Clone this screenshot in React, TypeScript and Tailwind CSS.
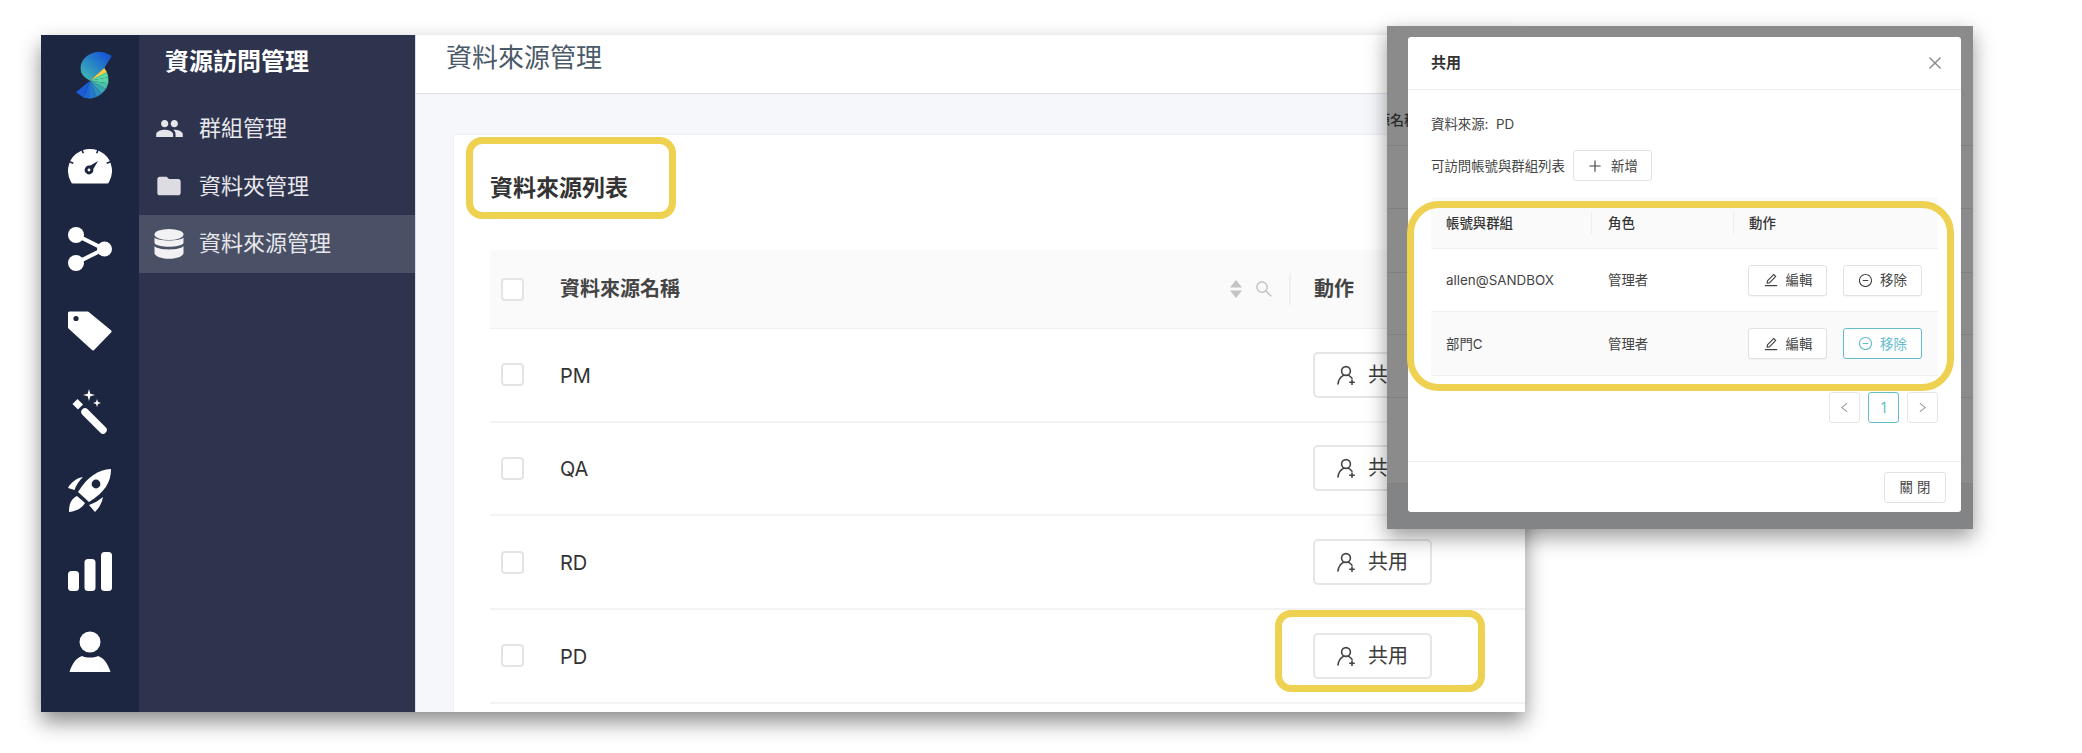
import { MdFolder, MdPeople } from "react-icons/md";
import {
  AiOutlineClose,
  AiOutlineEdit,
  AiOutlineLeft,
  AiOutlineMinusCircle,
  AiOutlinePlus,
  AiOutlineRight,
  AiOutlineSearch,
} from "react-icons/ai";

const Logo = () => (
  <svg width="60" height="70" viewBox="0 0 180 210">
    <defs>
      <linearGradient id="lg" x1="0.1" y1="0.9" x2="0.8" y2="0.1">
        <stop offset="0" stopColor="#3fb4b4" />
        <stop offset="1" stopColor="#1559d6" />
      </linearGradient>
    </defs>
    <path d="M140 48 C122 36 100 32 85 38 C60 46 45 66 47 88 C48 104 60 114 75 122 L118 84 Z" fill="url(#lg)" />
    <path d="M75 122 L118 84 L126 97 Z" fill="#f2d048" />
    <path d="M75 122 L126 97 L130 112 Z" fill="#55dba6" />
    <path d="M75 122 L130 112 L130 130 Z" fill="#5ad3a6" />
    <path d="M75 122 L130 130 L123 147 Z" fill="#48bfa8" />
    <path d="M75 122 L123 147 L110 161 Z" fill="#3aa7b4" />
    <path d="M75 122 L110 161 L95 171 Z" fill="#2d8fc2" />
    <path d="M75 122 L95 171 L75 176 Z" fill="#2478cc" />
    <path d="M75 122 L75 176 L56 173 Z" fill="#1e68d2" />
    <path d="M75 122 L56 173 L33 157 Z" fill="#1a5cd6" />
  </svg>
);

const Gauge = () => (
  <svg width="44" height="36" viewBox="0 0 44 36">
    <path d="M5 35.5 Q3.5 35.5 3 34 A22 22 0 1 1 41 34 Q40.5 35.5 39 35.5 Z" fill="#fff" />
    <g stroke="#1d2640" strokeWidth="1.6">
      <path d="M28.7 5.3 L30.6 0.2" />
      <path d="M15.3 5.3 L13.4 0.2" />
      <path d="M38.7 15.3 L43.8 13.2" />
      <path d="M5.3 15.3 L0.2 13.2" />
    </g>
    <circle cx="21" cy="22" r="4.4" fill="#1d2640" />
    <path d="M19 19.5 L30 13 L23.5 24 Z" fill="#1d2640" />
    <circle cx="21" cy="22" r="1.4" fill="#fff" />
  </svg>
);

const Share = () => (
  <svg width="44" height="44" viewBox="0 0 44 44">
    <path d="M8 8 L36 22 L8 36" stroke="#fff" strokeWidth="4" fill="none" />
    <circle cx="8" cy="8" r="8" fill="#fff" />
    <circle cx="36.5" cy="22" r="7.5" fill="#fff" />
    <circle cx="8" cy="36" r="8" fill="#fff" />
  </svg>
);

const Tag = () => (
  <svg width="44" height="40" viewBox="0 0 44 40">
    <path
      d="M1.5 2 L19.5 2 L42 20.5 L25 38 L1.5 16.5 Z"
      fill="#fff"
      stroke="#fff"
      strokeWidth="3"
      strokeLinejoin="round"
    />
    <circle cx="8" cy="7.5" r="2.6" fill="#1d2640" />
  </svg>
);

const Wand = () => (
  <svg width="36" height="45" viewBox="0 0 36 45">
    <path d="M13 23 L31 41" stroke="#fff" strokeWidth="7.5" strokeLinecap="round" />
    <path d="M3 12.5 L8.5 18" stroke="#fff" strokeWidth="7" />
    <path d="M17 0 L18.3 4.7 L23 6 L18.3 7.3 L17 12 L15.7 7.3 L11 6 L15.7 4.7 Z" fill="#fff" />
    <path d="M25 10 L26 13 L29 14 L26 15 L25 18 L24 15 L21 14 L24 13 Z" fill="#fff" />
  </svg>
);

const Rocket = () => (
  <svg width="44" height="44" viewBox="0 0 44 44" fill="#fff">
    <path d="M43 0 C30 1 20 7 10 23 L21 33 C37 23 43 13 43 0 Z" />
    <circle cx="28" cy="15" r="4.4" fill="#1d2640" />
    <path d="M0 19 C3 13 9 9 15 8 C11 12 8 16 6.5 21 Z" />
    <path d="M35 28 C34 34 31 39 27 43 L21 36 C27 34 31 31 35 28 Z" />
    <path d="M1 43 C1 35 3 30 9 27 L17 34 C14 39 9 42 1 43 Z" />
  </svg>
);

const Bars = () => (
  <svg width="44" height="39" viewBox="0 0 44 39">
    <rect x="0" y="19" width="11" height="20" rx="3.5" fill="#fff" />
    <rect x="16.5" y="7" width="11" height="32" rx="3.5" fill="#fff" />
    <rect x="33" y="0" width="11" height="39" rx="3.5" fill="#fff" />
  </svg>
);

const UserFill = () => (
  <svg width="42" height="41" viewBox="0 0 42 41">
    <circle cx="21" cy="11" r="10.5" fill="#fff" />
    <path d="M0.5 41 C3 33 7 27 13 25 C17 27 25 27 29 25 C35 27 39 33 41.5 41 Z" fill="#fff" />
  </svg>
);

const Database = () => (
  <svg width="30" height="30" viewBox="0 0 30 30" fill="#f2f2f4">
    <ellipse cx="15" cy="5.5" rx="14.5" ry="5.5" />
    <path d="M0.5 8.5 C3 12.5 27 12.5 29.5 8.5 V14 C27 19 3 19 0.5 14 Z" />
    <path d="M0.5 17 C3 21.5 27 21.5 29.5 17 V24.5 C27 31.5 3 31.5 0.5 24.5 Z" />
  </svg>
);

const UserAdd = () => (
  <svg width="18" height="20" viewBox="0 0 18 20" fill="none" stroke="#444" strokeWidth="1.6" strokeLinecap="round">
    <circle cx="9" cy="6" r="4.4" />
    <path d="M1 19 C1.4 15 3.4 12 6.4 10.4" />
    <path d="M11.6 10.4 C13 11.2 14.2 12.2 15 13.4" />
    <path d="M15 15 V19.4 M12.8 17.2 H17.2" />
  </svg>
);

const Sort = () => (
  <svg width="12" height="20" viewBox="0 0 12 20" fill="#c4c4c4">
    <path d="M6 1 L12 8.5 H0 Z" />
    <path d="M6 19 L12 11.5 H0 Z" />
  </svg>
);

const railItems = [
  { el: <Gauge />, h: "h-[82px]" },
  { el: <Share />, h: "h-[83px]" },
  { el: <Tag />, h: "h-[81px]" },
  { el: <Wand />, h: "h-[80px]" },
  { el: <Rocket />, h: "h-[80px]" },
  { el: <Bars />, h: "h-[80px]" },
  { el: <UserFill />, h: "h-[80px]" },
];

const menu = [
  { icon: <MdPeople size={29} color="#e6e6ea" />, label: "群組管理", active: false },
  { icon: <MdFolder size={28} color="#dcdce2" />, label: "資料夾管理", active: false },
  { icon: <Database />, label: "資料來源管理", active: true },
];

const Checkbox = () => (
  <div className="w-[23px] h-[23px] rounded-[4px] border-2 border-[#e4e4e4] bg-white" />
);

const ModalBtn = ({ children, teal }: { children: React.ReactNode; teal?: boolean }) => (
  <button
    className={
      teal
        ? "w-[79px] h-[31px] flex items-center justify-center gap-[7px] rounded-[3px] border border-[#63bccb] text-[#63bccb] bg-white"
        : "w-[79px] h-[31px] flex items-center justify-center gap-[7px] rounded-[3px] border border-[#e2e2e2] text-[#444] bg-white shadow-[0_1px_1px_rgba(0,0,0,0.04)]"
    }
  >
    {children}
  </button>
);

const overlayLines = ["top-[119px]", "top-[182px]", "top-[246px]", "top-[308px]", "top-[371px]", "top-[457px]"];

export default function App() {
  return (
    <div className="relative w-[2082px] h-[753px] bg-white overflow-hidden font-['Inter','Noto_Sans_CJK_TC',sans-serif] pl-[41px] pt-[35px]">
      {/* main window */}
      <div className="flex w-[1484px] h-[677px] overflow-hidden shadow-[0_10px_20px_rgba(0,0,0,0.45)]">
        <aside className="w-[98px] shrink-0 bg-[#1d2640] flex flex-col">
          <div className="h-[90px] pt-[5px] pl-[24px] shrink-0">
            <Logo />
          </div>
          {railItems.map((it, i) => (
            <div key={i} className={`${it.h} shrink-0 flex items-center justify-center`}>
              {it.el}
            </div>
          ))}
        </aside>

        <nav className="w-[276px] shrink-0 bg-[#2e334e] flex flex-col">
          <div className="pl-[26px] pt-[11px] h-[65px] text-[24px] leading-[32px] font-semibold text-white">資源訪問管理</div>
          {menu.map((m) => (
            <div
              key={m.label}
              className={
                m.active
                  ? "h-[57.5px] flex items-center bg-[#4a5065] text-[22px] text-[#e8e8ec]"
                  : "h-[57.5px] flex items-center text-[22px] text-[#e8e8ec]"
              }
            >
              <div className="w-[60px] flex justify-center">{m.icon}</div>
              <span>{m.label}</span>
            </div>
          ))}
        </nav>

        <main className="flex-1 min-w-0 bg-[#f5f7fb] border-l border-[#d9dbe6] flex flex-col">
          <header className="h-[59px] shrink-0 bg-white border-b border-[#dedfe3] pl-[30px] pt-[6px] text-[26px] leading-[34px] text-[#4a5968]">
            資料來源管理
          </header>
          <section className="flex-1 mt-[40px] ml-[37px] bg-white pl-[36px] pt-[37px] border-t border-l border-[#eef0f4]">
            <h2 className="text-[23px] leading-[32px] font-semibold text-[#333] h-[78px]">資料來源列表</h2>
            <div className="flex items-center h-[79px] bg-[#fafafa] border-b border-[#f0f0f0]">
              <div className="w-[70px] pl-[11px]">
                <Checkbox />
              </div>
              <div className="flex-1 text-[20px] font-semibold text-[#444]">資料來源名稱</div>
              <div className="flex items-center gap-[12px] pr-[15px]">
                <Sort />
                <AiOutlineSearch size={20} color="#c4c4c4" />
              </div>
              <div className="w-[236px] h-[32px] border-l-2 border-[#f0f0f0] pl-[23px] flex items-center text-[20px] font-semibold text-[#444]">
                動作
              </div>
            </div>
            {["PM", "QA", "RD", "PD"].map((name) => (
              <div key={name} className="flex items-center h-[93.67px] border-b-2 border-[#f3f3f3]">
                <div className="w-[70px] pl-[11px]">
                  <Checkbox />
                </div>
                <div className="flex-1 pt-[2px] text-[20px] text-[#333]">{name}</div>
                <div className="w-[236px] pl-[24px]">
                  <button className="w-[119px] h-[46px] flex items-center justify-center gap-[13px] rounded-[5px] border-2 border-[#e6e6e6] bg-white text-[20px] text-[#3c3c3c]">
                    <UserAdd />
                    <span>共用</span>
                  </button>
                </div>
              </div>
            ))}
          </section>
        </main>
      </div>

      {/* floating dialog capture */}
      <div className="absolute left-[1387px] top-[26px] w-[586px] h-[503px] bg-[#8b8b8b] overflow-hidden shadow-[0_8px_20px_rgba(0,0,0,0.4)]">
        {overlayLines.map((t) => (
          <div key={t} className={`absolute left-0 right-0 h-px bg-[#7f7f7f] ${t}`} />
        ))}
        <div className="absolute left-0 right-0 top-[458px] bottom-0 bg-[#838486]" />
        <div className="absolute left-[-11px] top-[84px] text-[14px] leading-[20px] font-medium text-[#2b2b2b] whitespace-nowrap">源名稱</div>
        <div className="absolute left-[21px] top-[11px] w-[553px] h-[475px] bg-white rounded-[3px] flex flex-col text-[13.4px] leading-[20px] text-[#444]">
          <div className="h-[53px] shrink-0 border-b border-[#ededed] pl-[23px] pr-[17px] flex items-center justify-between">
            <span className="text-[15px] font-semibold text-[#333]">共用</span>
            <AiOutlineClose size={18} color="#8c8c8c" />
          </div>
          <div className="flex-1 px-[23px] pt-[24px] flex flex-col">
            <div className="h-[20px]">
              資料來源:&nbsp;&nbsp;PD
            </div>
            <div className="mt-[16px] flex items-center gap-[8px] h-[31px]">
              <span>可訪問帳號與群組列表</span>
              <button className="w-[79px] h-[31px] flex items-center justify-center gap-[8px] rounded-[3px] border border-[#e2e2e2] bg-white text-[#444]">
                <AiOutlinePlus size={16} />
                <span>新增</span>
              </button>
            </div>
            <div className="mt-[16px]">
              <div className="grid grid-cols-[160px_142px_1fr] h-[52px] items-center bg-[#fafafa] border-b border-[#f0f0f0] font-medium text-[#333]">
                <div className="pl-[15px]">帳號與群組</div>
                <div className="border-l border-[#eeeeee] h-[22px] pl-[16px] flex items-center">角色</div>
                <div className="border-l border-[#eeeeee] h-[22px] pl-[15px] flex items-center">動作</div>
              </div>
              <div className="grid grid-cols-[160px_142px_1fr] h-[63px] items-center border-b border-[#f0f0f0]">
                <div className="pl-[15px]">allen@SANDBOX</div>
                <div className="pl-[17px]">管理者</div>
                <div className="pl-[15px] flex gap-[16px]">
                  <ModalBtn>
                    <AiOutlineEdit size={16} />
                    <span>編輯</span>
                  </ModalBtn>
                  <ModalBtn>
                    <AiOutlineMinusCircle size={15} />
                    <span>移除</span>
                  </ModalBtn>
                </div>
              </div>
              <div className="grid grid-cols-[160px_142px_1fr] h-[64px] items-center border-b border-[#f0f0f0] bg-[#fafafa]">
                <div className="pl-[15px]">部門C</div>
                <div className="pl-[17px]">管理者</div>
                <div className="pl-[15px] flex gap-[16px]">
                  <ModalBtn>
                    <AiOutlineEdit size={16} />
                    <span>編輯</span>
                  </ModalBtn>
                  <ModalBtn teal>
                    <AiOutlineMinusCircle size={15} />
                    <span>移除</span>
                  </ModalBtn>
                </div>
              </div>
            </div>
            <div className="mt-[16px] flex justify-end gap-[8px]">
              <div className="w-[31px] h-[31px] rounded-[3px] border border-[#e6e6e6] flex items-center justify-center text-[#9a9a9a]">
                <AiOutlineLeft size={13} />
              </div>
              <div className="w-[31px] h-[31px] rounded-[3px] border border-[#63bccb] flex items-center justify-center text-[14px] text-[#63bccb]">1</div>
              <div className="w-[31px] h-[31px] rounded-[3px] border border-[#e6e6e6] flex items-center justify-center text-[#9a9a9a]">
                <AiOutlineRight size={13} />
              </div>
            </div>
          </div>
          <div className="h-[51px] shrink-0 border-t border-[#ededed] flex items-center justify-end pr-[15px]">
            <button className="w-[62px] h-[31px] rounded-[3px] border border-[#e2e2e2] bg-white text-[#444] tracking-[4px] pl-[4px]">關閉</button>
          </div>
        </div>
      </div>

      {/* yellow annotations */}
      <div className="absolute left-[466px] top-[137px] w-[210px] h-[82px] border-[7px] border-[#efd152] rounded-[16px]" />
      <div className="absolute left-[1275px] top-[610px] w-[210px] h-[82px] border-[7px] border-[#efd152] rounded-[16px]" />
      <div className="absolute left-[1407px] top-[201px] w-[547px] h-[190px] border-[7px] border-[#efd152] rounded-[32px]" />
    </div>
  );
}
